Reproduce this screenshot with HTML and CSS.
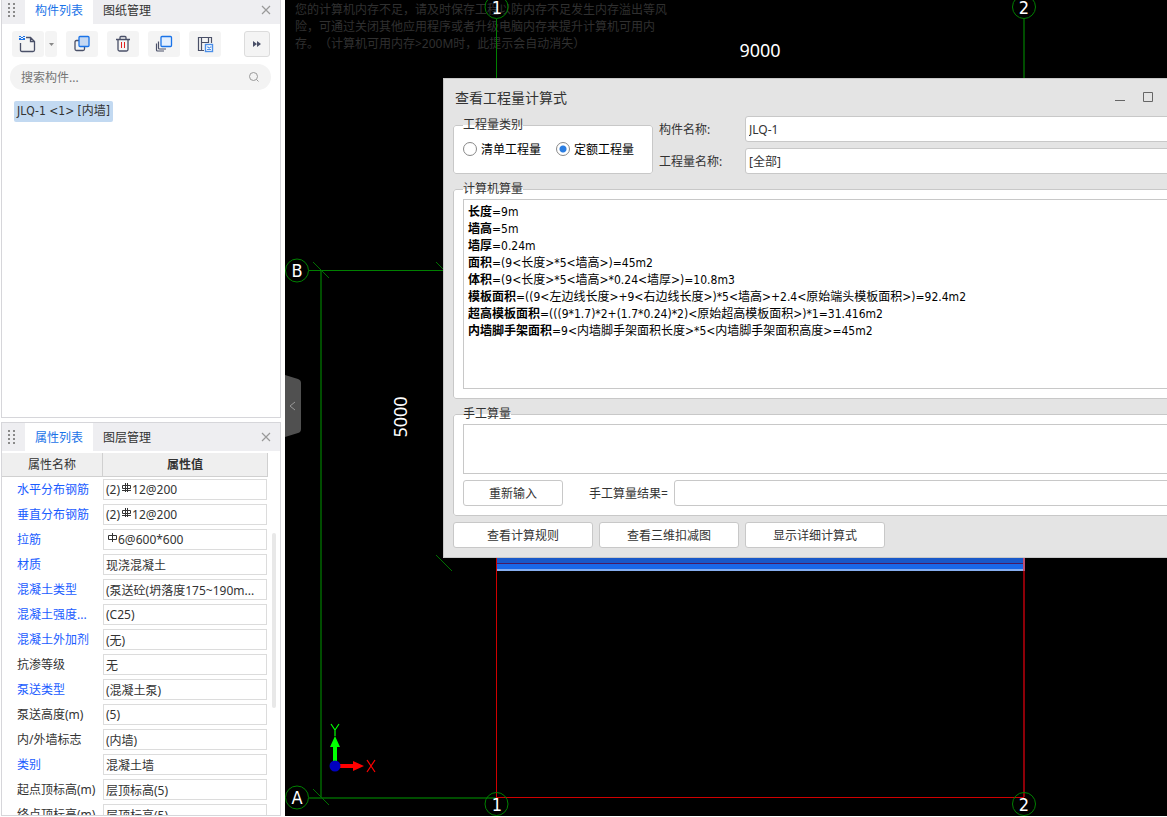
FILE: index.html
```html
<!DOCTYPE html>
<html lang="zh-CN">
<head>
    <meta charset="UTF-8">
    <meta name="viewport" content="width=device-width, initial-scale=1.0">
    <title>查看工程量计算式</title>
    <link rel="stylesheet" href="styles.css">
</head>
<body>
    <aside class="sidebar">
        <section class="panel panel-components">
            <div class="tab-bar">
                <svg class="grip" width="8" height="14" viewBox="0 0 8 14"><path d="M0 0h2v2H0zM5 0h2v2H5zM0 4h2v2H0zM5 4h2v2H5zM0 8h2v2H0zM5 8h2v2H5zM0 12h2v2H0zM5 12h2v2H5z" fill="#8a8a8a"/></svg>
                <button class="tab active">构件列表</button>
                <button class="tab">图纸管理</button>
                <button class="close" aria-label="关闭"><svg width="10" height="10" viewBox="0 0 10 10"><path d="M1 1l8 8M9 1L1 9" stroke="#999" stroke-width="1.2"/></svg></button>
            </div>
            <div class="toolbar">
                <div class="split">
                    <button class="tool" aria-label="新建">
                        <svg width="18" height="18" viewBox="0 0 18 18" fill="none"><path d="M7 2.500h4.500l4 4v8.500q0 1.500-1.500 1.500H3q-1.500 0-1.500-1.500V8M11.500 2.500v4h4" stroke="#4a5068" stroke-width="1.300"/><path d="M0 1h2v1H0zM4 1h2v1H4zM2 2h2v1H2zM0 3h2v2H0zM4 3h2v2H4zM2 4h2v1H2z" fill="#1a73e8"/></svg>
                    </button>
                    <button class="tool drop" aria-label="更多新建"><svg width="5" height="3" viewBox="0 0 5 3"><path d="M0 0h5L2.500 3z" fill="#888"/></svg></button>
                </div>
                <button class="tool" aria-label="复制">
                    <svg width="18" height="18" viewBox="0 0 18 18" fill="none"><path d="M6 5.500H3.500q-1.500 0-1.500 1.500v7q0 1.500 1.500 1.500H10q1.500 0 1.500-1.500v-2" stroke="#4a5068" stroke-width="1.300"/><rect x="6" y="1.500" width="10" height="10" rx="1" fill="#c5d8f2" stroke="#1a73e8" stroke-width="1.300"/></svg>
                </button>
                <button class="tool" aria-label="删除">
                    <svg width="18" height="18" viewBox="0 0 18 18" fill="none"><path d="M2 4.500h14M6 4V2.500q0-1 1-1h4q1 0 1 1V4M4 4.500v10q0 1.500 1.500 1.500h7q1.500 0 1.500-1.500v-10" stroke="#4a5068" stroke-width="1.300"/><path d="M7.500 7v6M10.500 7v6" stroke="#e02020"/></svg>
                </button>
                <button class="tool" aria-label="层间复制">
                    <svg width="18" height="18" viewBox="0 0 18 18" fill="none"><path d="M3.500 6.500V13q0 1 1 1H11M1.500 8.500V15q0 1 1 1H9" stroke="#4a5068" stroke-width="1.200"/><rect x="6" y="1.500" width="10.500" height="10" rx="1" fill="#e4f0ff" stroke="#1a73e8" stroke-width="1.300"/></svg>
                </button>
                <button class="tool" aria-label="存档">
                    <svg width="18" height="18" viewBox="0 0 18 18" fill="none"><path d="M8 15.500H2.500v-13h13V8M5.500 2.500v13M12.500 2.500v5.500M5.500 7.500h7" stroke="#4a5068" stroke-width="1.200"/><rect x="9.500" y="9.500" width="7" height="7" fill="#fff" stroke="#4c8fe8" stroke-width="1.400"/><path d="M11 12h1.500v1H14v-1h1.500M11 14.500h4" stroke="#4c8fe8"/></svg>
                </button>
                <button class="tool more" aria-label="更多"><svg width="8" height="6" viewBox="0 0 8 6"><path d="M0 0l4 3-4 3zM4 0l4 3-4 3z" fill="#4a5068"/></svg></button>
            </div>
            <div class="search">
                <input type="text" placeholder="搜索构件..." aria-label="搜索构件">
                <svg width="12" height="12" viewBox="0 0 12 12" fill="none" stroke="#999"><circle cx="5.500" cy="5.500" r="4"/><path d="M8.500 8.500l2 2"/></svg>
            </div>
            <ul class="tree">
                <li class="selected">JLQ-1 &lt;1&gt; [内墙]</li>
            </ul>
        </section>

        <section class="panel panel-properties">
            <div class="tab-bar tall">
                <svg class="grip" width="8" height="14" viewBox="0 0 8 14"><path d="M0 0h2v2H0zM5 0h2v2H5zM0 4h2v2H0zM5 4h2v2H5zM0 8h2v2H0zM5 8h2v2H5zM0 12h2v2H0zM5 12h2v2H5z" fill="#8a8a8a"/></svg>
                <button class="tab active">属性列表</button>
                <button class="tab">图层管理</button>
                <button class="close" aria-label="关闭"><svg width="10" height="10" viewBox="0 0 10 10"><path d="M1 1l8 8M9 1L1 9" stroke="#999" stroke-width="1.2"/></svg></button>
            </div>
            <div class="property-area">
                <table class="properties">
                    <thead>
                        <tr><th class="name-head">属性名称</th><th>属性值</th></tr>
                    </thead>
                    <tbody>
                        <tr><td class="key">水平分布钢筋</td><td><div class="value">(2)<svg class="rebar" width="9" height="11" viewBox="0 0 9 11"><path d="M.5 3.500h8v3h-8zM0 8.500h9M3.500 1v9M5.500 1v9" fill="none" stroke="#333"/></svg>12@200</div></td></tr>
                        <tr><td class="key">垂直分布钢筋</td><td><div class="value">(2)<svg class="rebar" width="9" height="11" viewBox="0 0 9 11"><path d="M.5 3.500h8v3h-8zM0 8.500h9M3.500 1v9M5.500 1v9" fill="none" stroke="#333"/></svg>12@200</div></td></tr>
                        <tr><td class="key">拉筋</td><td><div class="value"><svg class="rebar" width="9" height="11" viewBox="0 0 9 11"><path d="M.5 3.500h8v4h-8zM4.500 1v9" fill="none" stroke="#333"/></svg>6@600*600</div></td></tr>
                        <tr><td class="key"><label for="p4">材质</label></td><td><input class="value" id="p4" type="text" value="现浇混凝土"></td></tr>
                        <tr><td class="key"><label for="p5">混凝土类型</label></td><td><input class="value" id="p5" type="text" value="(泵送砼(坍落度175~190m..."></td></tr>
                        <tr><td class="key"><label for="p6">混凝土强度...</label></td><td><input class="value" id="p6" type="text" value="(C25)"></td></tr>
                        <tr><td class="key"><label for="p7">混凝土外加剂</label></td><td><input class="value" id="p7" type="text" value="(无)"></td></tr>
                        <tr><td><label for="p8">抗渗等级</label></td><td><input class="value" id="p8" type="text" value="无"></td></tr>
                        <tr><td class="key"><label for="p9">泵送类型</label></td><td><input class="value" id="p9" type="text" value="(混凝土泵)"></td></tr>
                        <tr><td><label for="p10">泵送高度(m)</label></td><td><input class="value" id="p10" type="text" value="(5)"></td></tr>
                        <tr><td><label for="p11">内/外墙标志</label></td><td><input class="value" id="p11" type="text" value="(内墙)"></td></tr>
                        <tr><td class="key"><label for="p12">类别</label></td><td><input class="value" id="p12" type="text" value="混凝土墙"></td></tr>
                        <tr><td><label for="p13">起点顶标高(m)</label></td><td><input class="value" id="p13" type="text" value="层顶标高(5)"></td></tr>
                        <tr><td><label for="p14">终点顶标高(m)</label></td><td><input class="value" id="p14" type="text" value="层顶标高(5)"></td></tr>
                    </tbody>
                </table>
                <div class="scrollbar"><div class="thumb"></div></div>
            </div>
        </section>
    </aside>

    <main class="viewport">
        <p class="memory-tip">您的计算机内存不足，请及时保存工程以防内存不足发生内存溢出等风险，可通过关闭其他应用程序或者升级电脑内存来提升计算机可用内存。（计算机可用内存&gt;200M时，此提示会自动消失）</p>

        <svg class="drawing">
            <!-- axis grid -->
            <g fill="none" stroke="#008000">
                <path d="M211.500 19v60M0 270.500h1M24 270.500h135"/>
                <path d="M739 19v60M36 271v527M24 798h187" stroke="#004d00" stroke-width="2"/>
                <path d="M28 262l16 16M151 262l16 16M151 555l16 16M28 789l16 16" stroke="#007000"/>
            </g>
            <!-- wall -->
            <rect x="212" y="556" width="527" height="15" fill="#1a68e8"/>
            <rect x="212" y="556" width="527" height="7" fill="#1858c8"/>
            <rect x="212" y="563" width="527" height="1" fill="#4a1a60"/>
            <rect x="212" y="569" width="527" height="2" fill="#86aef0"/>
            <rect x="211" y="557" width="1" height="240" fill="#d00000"/>
            <rect x="211" y="797" width="528" height="1" fill="#d00000"/>
            <rect x="738" y="571" width="2" height="226" fill="#8c0008"/>
            <rect x="738" y="557" width="2" height="14" fill="#c05070"/>
            <!-- axis bubbles -->
            <g fill="none" stroke="#008000">
                <circle cx="211.500" cy="7" r="11.500"/>
                <circle cx="739" cy="7" r="11.500"/>
                <circle cx="12" cy="270.500" r="11.500"/>
                <circle cx="12" cy="797.500" r="11.500"/>
                <circle cx="211.500" cy="804" r="11.500"/>
                <circle cx="739" cy="804" r="11.500"/>
            </g>
            <g class="axis-label">
                <text x="212" y="14">1</text>
                <text x="739" y="14">2</text>
                <text x="12" y="277">B</text>
                <text x="12" y="804">A</text>
                <text x="212" y="811">1</text>
                <text x="739" y="811">2</text>
            </g>
            <g class="dimension">
                <text x="475" y="57">9000</text>
                <text transform="translate(122 417) rotate(-90)">5000</text>
            </g>
            <!-- coordinate icon -->
            <path d="M48 762v-15h-3l5-11 5 11h-3v15z" fill="#00ff00"/>
            <path d="M54 764h14v-3l11 5-11 5v-3H54z" fill="#ff0000"/>
            <circle cx="50" cy="766" r="5.500" fill="#0000c0"/>
            <path d="M46 724l4 6 4-6M50 730v6" fill="none" stroke="#00ff00" stroke-width="1.200"/>
            <path d="M82 760l8 12M90 760l-8 12" stroke="#ff0000" stroke-width="1.200"/>
        </svg>

        <button class="collapse" aria-label="收起"><svg width="16" height="62" viewBox="0 0 16 62"><path d="M0 0l13 4q3 1 3 4v46q0 3-3 4L0 62z" fill="#505050"/><path d="M10 27l-5 4 5 4" fill="none" stroke="#999"/></svg></button>

        <div class="dialog" role="dialog" aria-labelledby="dialog-title">
            <div class="title-bar">
                <h1 id="dialog-title">查看工程量计算式</h1>
                <button aria-label="最小化"><svg width="12" height="12" viewBox="0 0 12 12"><path d="M1 8.500h10" stroke="#666"/></svg></button>
                <button aria-label="最大化"><svg width="12" height="12" viewBox="0 0 12 12"><path d="M1.500 .5h9v9h-9z" fill="none" stroke="#666"/></svg></button>
            </div>
            <div class="filters">
                <fieldset class="group kinds">
                    <legend>工程量类别</legend>
                    <label><input type="radio" name="kind">清单工程量</label>
                    <label><input type="radio" name="kind" checked>定额工程量</label>
                </fieldset>
                <div class="fields">
                    <label for="component-name">构件名称:</label>
                    <input id="component-name" type="text" value="JLQ-1">
                    <label for="quantity-name">工程量名称:</label>
                    <input id="quantity-name" type="text" value="[全部]">
                </div>
            </div>
            <fieldset class="group">
                <legend>计算机算量</legend>
                <div class="result">
                    <p><b>长度</b>=9m</p>
                    <p><b>墙高</b>=5m</p>
                    <p><b>墙厚</b>=0.24m</p>
                    <p><b>面积</b>=(9&lt;长度&gt;*5&lt;墙高&gt;)=45m2</p>
                    <p><b>体积</b>=(9&lt;长度&gt;*5&lt;墙高&gt;*0.24&lt;墙厚&gt;)=10.8m3</p>
                    <p><b>模板面积</b>=((9&lt;左边线长度&gt;+9&lt;右边线长度&gt;)*5&lt;墙高&gt;+2.4&lt;原始端头模板面积&gt;)=92.4m2</p>
                    <p><b>超高模板面积</b>=(((9*1.7)*2+(1.7*0.24)*2)&lt;原始超高模板面积&gt;)*1=31.416m2</p>
                    <p><b>内墙脚手架面积</b>=9&lt;内墙脚手架面积长度&gt;*5&lt;内墙脚手架面积高度&gt;=45m2</p>
                </div>
            </fieldset>
            <fieldset class="group">
                <legend>手工算量</legend>
                <textarea class="manual" aria-label="手工算量"></textarea>
                <div class="manual-row">
                    <button class="btn small">重新输入</button>
                    <label for="manual-result">手工算量结果=</label>
                    <input id="manual-result" type="text">
                </div>
            </fieldset>
            <div class="actions">
                <button class="btn">查看计算规则</button>
                <button class="btn">查看三维扣减图</button>
                <button class="btn">显示详细计算式</button>
            </div>
        </div>
    </main>
</body>
</html>
```
FILE: styles.css
```css
* {
    box-sizing: border-box;
}

body {
    margin: 0;
    display: flex;
    height: 100vh;
    overflow: hidden;
    background: #fff;
    color: #333;
    font-family: "Noto Sans", "Noto Sans CJK SC", sans-serif;
    font-size: 12px;
    line-height: 17px;
    text-spacing-trim: space-all;
}

button, input, textarea {
    font: inherit;
    color: inherit;
}

button {
    padding: 0;
    border: 0;
    background: none;
}

svg {
    display: block;
}

/* left side */
.sidebar {
    flex: none;
    width: 285px;
    padding: 0 4px 1px 1px;
    display: flex;
    flex-direction: column;
    gap: 4px;
}

.panel {
    display: flex;
    flex-direction: column;
    min-height: 0;
    overflow: hidden;
    border: 1px solid #d6d6da;
}

.panel-components {
    flex: 1 1 418px;
    border-top: 0;
}

.panel-properties {
    flex: 1 1 394px;
}

.tab-bar {
    flex: none;
    display: flex;
    align-items: center;
    height: 24px;
    padding: 0 9px 0 6px;
    background: #eeeef1;
}

.tab-bar.tall {
    height: 28px;
}

.grip {
    margin-right: 9px;
}

.tab {
    align-self: stretch;
    padding: 0 10px;
}

.tab-bar:not(.tall) .tab {
    padding-bottom: 4px;
}

.tab-bar:not(.tall) .grip,
.tab-bar:not(.tall) .close {
    margin-bottom: 4px;
}

.tab.active {
    background: #fff;
    color: #1a73e8;
}

.close {
    margin-left: auto;
}

.toolbar {
    display: flex;
    gap: 9px;
    padding: 7px 10px;
}

.split {
    display: flex;
    gap: 1px;
}

.tool {
    display: flex;
    align-items: center;
    justify-content: center;
    width: 32px;
    height: 26px;
    border-radius: 3px;
    background: #f4f4f4;
}

.tool.drop {
    width: 12px;
}

.tool.more {
    width: 26px;
    margin-left: auto;
    border: 1px solid #dcdcdc;
}

.search {
    display: flex;
    align-items: center;
    height: 26px;
    margin: 0 9px 0 8px;
    padding: 0 11px;
    border-radius: 13px;
    background: #f3f3f3;
}

.search input {
    flex: 1;
    min-width: 0;
    padding: 0;
    border: 0;
    background: none;
}

.search input::placeholder {
    color: #757575;
}

.tree {
    margin: 11px 12px;
    padding: 0;
    list-style: none;
}

.tree .selected {
    display: inline-block;
    padding: 2px 3px;
    border-radius: 2px;
    background: #c2d9f1;
    font-family: "DejaVu Sans Condensed", "Noto Sans CJK SC", sans-serif;
}

.property-area {
    display: flex;
    flex: 1;
    min-height: 0;
    padding-top: 2px;
    overflow: hidden;
}

.properties {
    flex: 1;
    align-self: flex-start;
    table-layout: fixed;
    border-collapse: separate;
    border-spacing: 0;
}

.properties th {
    height: 24px;
    padding: 0;
    border-right: 1px solid #d0d0d0;
    border-bottom: 1px solid #d0d0d0;
    background: #efefef;
}

.properties .name-head {
    width: 101px;
    font-weight: normal;
}

.properties td {
    height: 25px;
    padding: 0 1px 0 0;
    white-space: nowrap;
}

.properties td:first-child {
    padding-left: 15px;
}

.properties .key {
    color: #1a5cff;
}

.value {
    display: flex;
    align-items: center;
    width: 100%;
    height: 21px;
    padding: 0 2px;
    border: 1px solid #dcdcdc;
    background: #fff;
}

.rebar {
    margin: 0 1px 4px 2px;
}

.scrollbar {
    flex: none;
    width: 12px;
    padding: 80px 4px 0;
}

.thumb {
    width: 4px;
    height: 175px;
    border-radius: 2px;
    background: #e8e8e8;
}

/* drawing area */
.viewport {
    position: relative;
    flex: 1;
    min-width: 0;
    margin-bottom: 1px;
    overflow: hidden;
    background: #000;
}

.memory-tip {
    position: absolute;
    top: 1px;
    left: 10px;
    width: 376px;
    margin: 0;
    color: #303030;
}

.drawing {
    position: absolute;
    top: 0;
    left: 0;
    width: 100%;
    height: 100%;
}

.axis-label {
    fill: #fff;
    font-family: "DejaVu Sans Condensed", sans-serif;
    font-size: 18px;
    text-anchor: middle;
}

.dimension {
    fill: #fff;
    font-size: 18px;
    text-anchor: middle;
}

.collapse {
    position: absolute;
    top: 375px;
    left: 0;
}

/* the window hangs over the right edge of the drawing area */
.dialog {
    position: absolute;
    top: 78px;
    left: 158px;
    right: -30px;
    display: flex;
    flex-direction: column;
    gap: 6px;
    padding: 0 9px 9px;
    border: 1px solid #c8c8c8;
    background: #e4e4e4;
}

.title-bar {
    display: flex;
    align-items: center;
    gap: 16px;
    height: 37px;
    margin-bottom: -6px;
    padding: 0 33px 0 2px;
}

.title-bar h1 {
    flex: 1;
    margin: 0;
    font-size: 14px;
    font-weight: normal;
}

.filters {
    display: grid;
    grid-template-columns: 200px 1fr;
    gap: 6px;
}

.group {
    min-width: 0;
    margin: 0;
    padding: 1px 9px 9px;
    border: 1px solid #c8c8c8;
    border-radius: 3px;
    background: #fff;
}

.group legend {
    height: 18px;
    padding: 0;
    line-height: 18px;
}

.kinds {
    display: flex;
    align-items: center;
    gap: 15px;
    height: 58px;
    padding: 0 9px 9px;
    color: #000;
}

.kinds legend {
    color: #333;
}

.kinds label {
    display: flex;
    align-items: center;
    gap: 4px;
}

.kinds input {
    appearance: none;
    width: 14px;
    height: 14px;
    margin: 0;
    border: 1px solid #888;
    border-radius: 50%;
    background: #fff;
}

.kinds input:checked {
    background: radial-gradient(circle, #2a7de1 3px, #fff 4px);
}

.fields {
    display: grid;
    grid-template-columns: 80px 1fr;
    gap: 6px;
    align-items: center;
}

.fields input,
.manual-row input {
    min-width: 0;
    height: 26px;
    padding: 0 3px;
    border: 1px solid #c8c8c8;
    border-radius: 3px;
    background: #fff;
}

.result {
    min-height: 190px;
    padding: 4px;
    border: 1px solid #c8c8c8;
    color: #000;
    font-family: "DejaVu Sans Condensed", "Noto Sans CJK SC", sans-serif;
}

.result p {
    margin: 0;
}

.manual {
    display: block;
    width: 100%;
    height: 50px;
    border: 1px solid #c8c8c8;
    resize: none;
}

.manual-row {
    display: flex;
    align-items: center;
    gap: 6px;
    margin-top: 6px;
}

.manual-row label {
    margin-left: 20px;
}

.manual-row input {
    flex: 1;
}

.actions {
    display: flex;
    gap: 6px;
}

.btn {
    width: 140px;
    height: 26px;
    border: 1px solid #c8c8c8;
    border-radius: 3px;
    background: #fff;
}

.btn.small {
    width: 100px;
}
```
